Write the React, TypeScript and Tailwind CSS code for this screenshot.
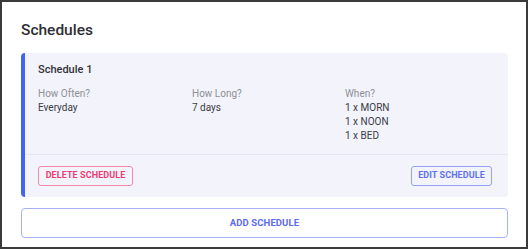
const when = ['1 x MORN', '1 x NOON', '1 x BED']

function Field({ label, children }: { label: string; children: React.ReactNode }) {
  return (
    <div className="flex flex-col text-[10px] leading-[14px]">
      <span className="text-[#8f8f96]">{label}</span>
      <div className="text-[#3c3c44]">{children}</div>
    </div>
  )
}

export default function App() {
  return (
    <div className="w-[528px] h-[249px] border-2 border-[#3a3a3a] bg-white font-['Roboto',sans-serif]">
      <div className="pt-[18px] pl-[19px] pr-[18px]">
        <h2 className="text-[15.5px] leading-[20px] font-medium text-[#2f2f35]">Schedules</h2>

        <div className="mt-[13px] rounded-[4px] border-l-4 border-[#4463f2] bg-[#f2f3fb]">
          <div className="pt-[9px] pb-[11px] pl-[13px] pr-4">
            <h3 className="text-[11px] leading-[16px] font-medium text-[#33333a]">Schedule 1</h3>
            <div className="mt-[9px] grid grid-cols-[154px_153px_1fr]">
              <Field label="How Often?">Everyday</Field>
              <Field label="How Long?">7 days</Field>
              <Field label="When?">
                {when.map((w) => (
                  <div key={w}>{w}</div>
                ))}
              </Field>
            </div>
          </div>
          <div className="border-t border-[#e4e6f1] pt-[11px] pb-[11px] pl-[13px] pr-4 flex justify-between">
            <button className="h-[20px] w-[95px] rounded-[3px] border-[1.5px] border-[#f48aa8] text-[9px] font-bold tracking-[0.01em] text-[#f03c72]">
              DELETE SCHEDULE
            </button>
            <button className="h-[20px] w-[81px] rounded-[3px] border-[1.5px] border-[#96a3f5] text-[9px] font-bold tracking-[0.01em] text-[#6072ee]">
              EDIT SCHEDULE
            </button>
          </div>
        </div>

        <button className="mt-[11px] h-[30px] w-full rounded-[4px] border-[1.5px] border-[#a6b2f8] bg-white text-[9.5px] font-bold tracking-[0.01em] text-[#5a6cf0]">
          ADD SCHEDULE
        </button>
      </div>
    </div>
  )
}
